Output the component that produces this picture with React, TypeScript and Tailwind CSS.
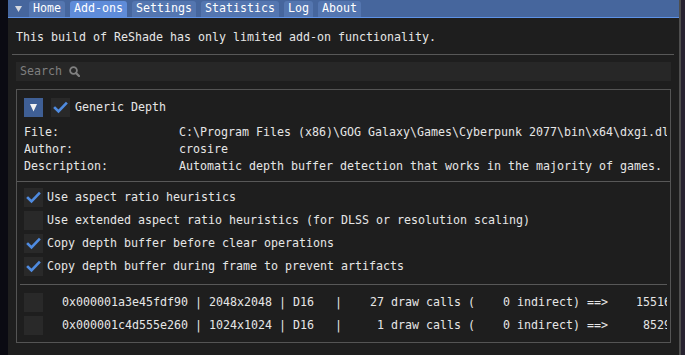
import { Fragment } from "react";

const font = "font-['DejaVu_Sans_Mono',monospace] text-[11.63px]";

function CheckBox({ checked }: { checked?: boolean }) {
  return (
    <div className="flex h-[19px] w-[19px] shrink-0 items-center justify-center bg-[#292929]">
      {checked && (
        <svg width="19" height="19" viewBox="0 0 19 19">
          <polyline points="4,10 7.5,13.5 15,5.5" fill="none" stroke="#4f8be0" strokeWidth="2.6" strokeLinecap="square" />
        </svg>
      )}
    </div>
  );
}

const tabs = ["Home", "Add-ons", "Settings", "Statistics", "Log", "About"];

const info = [
  ["File:", "C:\\Program Files (x86)\\GOG Galaxy\\Games\\Cyberpunk 2077\\bin\\x64\\dxgi.dll"],
  ["Author:", "crosire"],
  ["Description:", "Automatic depth buffer detection that works in the majority of games."],
];

const options: [string, boolean][] = [
  ["Use aspect ratio heuristics", true],
  ["Use extended aspect ratio heuristics (for DLSS or resolution scaling)", false],
  ["Copy depth buffer before clear operations", true],
  ["Copy depth buffer during frame to prevent artifacts", true],
];

const buffers = [
  "0x000001a3e45fdf90 | 2048x2048 | D16   |    27 draw calls (    0 indirect) ==>    15516 vertices",
  "0x000001c4d555e260 | 1024x1024 | D16   |     1 draw calls (    0 indirect) ==>     8529 vertices",
];

export default function App() {
  return (
    <div className={`flex h-[355px] w-[685px] overflow-hidden bg-[#0a0a12] text-[#e6e6e6] ${font}`}>
      <div className="w-[8px] shrink-0" />
      <div className="flex w-[671px] shrink-0 flex-col bg-[#1e1e1e]">
        {/* tab bar */}
        <div className="flex h-[17px] items-end bg-[#46669d]">
          <div className="flex h-full w-[21px] shrink-0 items-center pl-[7px]">
            <svg width="8" height="8" viewBox="0 0 8 8">
              <polygon points="0,1 7,1 3.5,7" fill="#d6d9e0" />
            </svg>
          </div>
          <div className="flex h-[16px] gap-[5px]">
            {tabs.map((t) => (
              <div
                key={t}
                className={`flex items-center rounded-t-[3px] px-[4px] text-white ${t === "Add-ons" ? "bg-[#5f8cd9]" : "bg-[#5476b0]"}`}
              >
                {t}
              </div>
            ))}
          </div>
        </div>
        <div className="h-[1px] bg-[#5e92e6]" />

        {/* body */}
        <div className="mt-[11px] flex h-[17px] items-center whitespace-pre pl-[8px]">
          This build of ReShade has only limited add-on functionality.
        </div>
        <div className="ml-[4px] mt-[8px] h-[1px] w-[662px] bg-[#585858]" />

        <div className="ml-[8px] mt-[7px] flex h-[19px] w-[655px] items-center gap-[7px] bg-[#272727] pl-[4px] text-[#7f7f7f]">
          <span>Search</span>
          <svg width="11" height="11" viewBox="0 0 11 11">
            <circle cx="4.5" cy="4.5" r="3.4" fill="none" stroke="#808080" strokeWidth="1.8" />
            <line x1="7" y1="7" x2="10" y2="10" stroke="#808080" strokeWidth="2.2" strokeLinecap="round" />
          </svg>
        </div>

        <div className="ml-[8px] mt-[8px] flex h-[254px] w-[655px] flex-col border border-[#545454]">
          {/* header */}
          <div className="ml-[7px] mt-[8px] flex h-[19px] items-center">
            <div className="flex h-[19px] w-[19px] items-center justify-center bg-[#3f5f95]">
              <svg width="19" height="19" viewBox="0 0 19 19">
                <polygon points="6,6 13,6 9.5,13.5" fill="#f2f2f2" />
              </svg>
            </div>
            <div className="ml-[8px]">
              <CheckBox checked />
            </div>
            <span className="ml-[5px]">Generic Depth</span>
          </div>

          <div className="mt-[7px] flex flex-col">
            {info.map(([k, v]) => (
              <div key={k} className="ml-[7px] flex h-[17px] w-[643px] items-center overflow-hidden whitespace-pre">
                <span className="w-[155px] shrink-0">{k}</span>
                <span className="shrink-0">{v}</span>
              </div>
            ))}
          </div>

          <div className="mt-[6px] h-[1px] w-[653px] bg-[#585858]" />

          <div className="ml-[7px] mt-[6px] flex flex-col gap-[4px]">
            {options.map(([label, on]) => (
              <div key={label} className="flex h-[19px] items-center gap-[4px] whitespace-pre">
                <CheckBox checked={on} />
                <span>{label}</span>
              </div>
            ))}
          </div>

          <div className="ml-[3px] mt-[8px] h-[1px] w-[647px] bg-[#585858]" />

          <div className="ml-[7px] mt-[8px] flex flex-col gap-[4px]">
            {buffers.map((b) => (
              <Fragment key={b}>
                <div className="flex h-[19px] w-[643px] items-center overflow-hidden whitespace-pre">
                  <CheckBox />
                  <span className="ml-[19px] shrink-0">{b}</span>
                </div>
              </Fragment>
            ))}
          </div>
        </div>
      </div>
      <div className="w-[2px] shrink-0 bg-[#4e4e4e]" />
      <div className="flex-1 bg-[#272230]" />
    </div>
  );
}
